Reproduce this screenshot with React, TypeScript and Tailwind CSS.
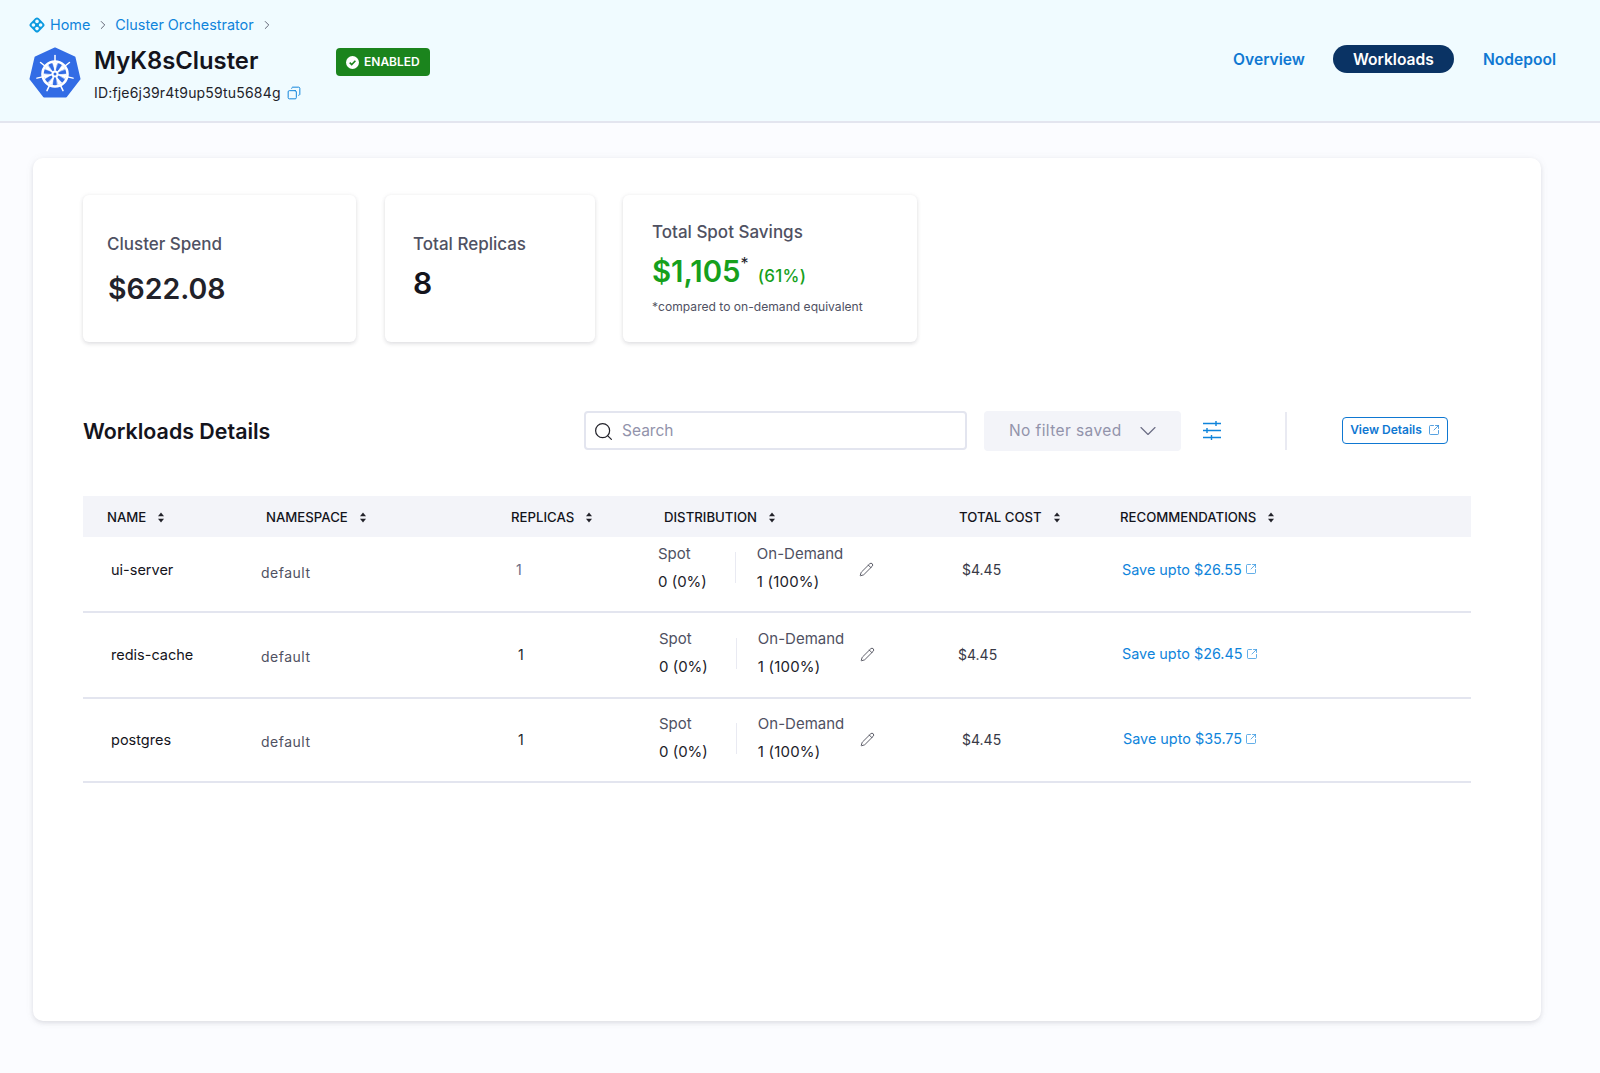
import { ChevronDown, ChevronRight, Copy, Pencil, Search, SquareArrowOutUpRight } from 'lucide-react';

const spokes = [0, 1, 2, 3, 4, 5, 6];

function K8sLogo() {
  return (
    <svg width="52" height="52" viewBox="0 0 52 52" className="shrink-0">
      <path d="M26 1.5 45.5 10.5 50.5 32 37 49.5H15L1.5 32 6.5 10.5Z" fill="#326ce5" stroke="#326ce5" strokeWidth="2" strokeLinejoin="round" />
      <g transform="translate(26 27)" stroke="#fff" fill="none" strokeLinecap="round">
        <circle r="12.5" strokeWidth="2.6" />
        {spokes.map((i) => (
          <g key={i} transform={`rotate(${(i * 360) / 7})`}>
            <line y1="-4" y2="-18.5" strokeWidth="1.5" />
            <path d="M0-3.5-2.4-11H2.4Z" fill="#fff" strokeWidth="0.5" />
          </g>
        ))}
        <circle r="3.6" fill="#fff" strokeWidth="0" />
        <circle r="1.5" fill="#326ce5" strokeWidth="0" />
      </g>
    </svg>
  );
}

function CrumbLogo() {
  return (
    <svg width="16" height="16" viewBox="0 0 16 16" className="shrink-0">
      <rect x="2" y="2" width="12" height="12" rx="2.6" fill="#0b9ae0" transform="rotate(45 8 8)" />
      <g fill="#f0fbff">
        <circle cx="8" cy="4.4" r="1.8" />
        <circle cx="8" cy="11.6" r="1.8" />
        <circle cx="4.4" cy="8" r="1.8" />
        <circle cx="11.6" cy="8" r="1.8" />
      </g>
    </svg>
  );
}

function SortIcon() {
  return (
    <svg width="8" height="11" viewBox="0 0 8 11" className="shrink-0" fill="#22222a">
      <path d="M4 .5 7 4.3H1Z" />
      <path d="M4 10.5 1 6.7H7Z" />
    </svg>
  );
}

function CheckBadge() {
  return (
    <svg width="13" height="13" viewBox="0 0 13 13" className="shrink-0">
      <circle cx="6.5" cy="6.5" r="6.5" fill="#fff" />
      <path d="M3.7 6.7 5.7 8.6 9.4 4.8" fill="none" stroke="#1b841d" strokeWidth="1.6" />
    </svg>
  );
}

function FilterLines() {
  return (
    <svg width="18" height="20" viewBox="0 0 18 20" className="ml-[22px] -mt-[2px] shrink-0" stroke="#0f84db" strokeWidth="1.4" fill="none">
      <path d="M0 3.5H18M0 10.5H18M0 17.5H18" />
      <path d="M13 1V6M4 8V13M8.5 15V20" />
    </svg>
  );
}

const headers = [
  { label: 'NAME', cell: 'pl-[24px]' },
  { label: 'NAMESPACE', cell: 'pl-[8px]' },
  { label: 'REPLICAS', cell: 'pl-[1px]' },
  { label: 'DISTRIBUTION', cell: 'pl-[9px]' },
  { label: 'TOTAL COST', cell: 'pl-[9px]' },
  { label: 'RECOMMENDATIONS', cell: 'pl-[10px]' },
];

const rows = [
  { name: 'ui-server', save: 'Save upto $26.55', height: 'h-[76px] pb-[9px]', replicas: 'pl-[6px] text-[#6b6d85]', dist: 'pl-[3px] -mt-[4px]', cost: 'pl-[12px]', rec: 'pl-[12px]' },
  { name: 'redis-cache', save: 'Save upto $26.45', height: 'h-[86px] pb-[2px]', replicas: 'pl-[8px] text-[#22222a]', dist: 'pl-[4px] -mt-[2px]', cost: 'pl-[8px]', rec: 'pl-[12px]' },
  { name: 'postgres', save: 'Save upto $35.75', height: 'h-[84px] pb-[2px]', replicas: 'pl-[8px] text-[#22222a]', dist: 'pl-[4px] -mt-[2px]', cost: 'pl-[12px]', rec: 'pl-[13px]' },
];

const gridCols = 'grid grid-cols-[175px_252px_145px_295px_160px_361px]';
const statCard = 'h-[147px] rounded-[6px] shadow-[0_2px_4px_rgba(40,41,61,0.12),0_0_4px_rgba(96,97,112,0.08)]';

export default function App() {
  return (
    <div className="min-h-[1073px] bg-[#fbfcff] font-['Inter',sans-serif] text-[#22222a]">
      {/* Header */}
      <header className="h-[123px] bg-[#f0fbff] border-b-2 border-[#e3e5ef] flex justify-between pl-[29px] pr-[44px]">
        <div>
          <div className="flex items-center h-[17px] mt-[16px] text-[14.4px] text-[#0f84db]">
            <CrumbLogo />
            <span className="ml-[5px]">Home</span>
            <ChevronRight size={14} strokeWidth={1.5} className="ml-[6px] text-[#4f5162]" />
            <span className="ml-[5px]">Cluster Orchestrator</span>
            <ChevronRight size={14} strokeWidth={1.5} className="ml-[6px] text-[#4f5162]" />
          </div>
          <div className="flex mt-[14px]">
            <K8sLogo />
            <div className="ml-[13px] -mt-[2px] w-[242px]">
              <div className="text-[23.8px] leading-[32px] font-semibold text-[#14141c]">MyK8sCluster</div>
              <div className="flex items-center mt-[6px] text-[14px] leading-[20px] tracking-[0.18px]">
                ID:fje6j39r4t9up59tu5684g
                <Copy size={14} strokeWidth={1.7} className="ml-[6px] text-[#0f84db] -scale-x-100" />
              </div>
            </div>
            <div className="mt-[1px] h-[28px] px-[10px] rounded-[4px] bg-[#1b841d] text-white text-[12px] font-semibold flex items-center gap-[5px]">
              <CheckBadge />
              ENABLED
            </div>
          </div>
        </div>
        <nav className="flex items-center h-[28px] mt-[45px] text-[15.6px] font-semibold text-[#0f78d2]">
          <span className="pt-[1px]">Overview</span>
          <span className="ml-[28px] pt-[1px] h-[28px] w-[121px] rounded-full bg-[#0a3364] text-white flex items-center justify-center">Workloads</span>
          <span className="ml-[29px] pt-[1px]">Nodepool</span>
        </nav>
      </header>

      {/* Main card */}
      <main className="ml-[33px] mt-[35px] w-[1508px] h-[863px] bg-white rounded-[10px] shadow-[0_2px_4px_rgba(40,41,61,0.1),0_1px_8px_rgba(96,97,112,0.08)] pl-[50px] pt-[37px]">
        <div className="flex items-start">
          <div className={`${statCard} w-[273px] pl-[24px] pt-[39px]`}>
            <div className="text-[17px] leading-[20px] font-medium text-[#4f5162]">Cluster Spend</div>
            <div className="mt-[15px] ml-[1px] text-[28.5px] leading-[40px] font-semibold text-[#22222a]">$622.08</div>
          </div>
          <div className={`${statCard} ml-[29px] w-[210px] pl-[28px] pt-[39px]`}>
            <div className="text-[17px] leading-[20px] font-medium text-[#4f5162]">Total Replicas</div>
            <div className="mt-[9px] text-[30px] leading-[40px] font-semibold text-[#14141c]">8</div>
          </div>
          <div className={`${statCard} ml-[28px] w-[294px] pl-[29px] pt-[27px]`}>
            <div className="text-[17px] leading-[20px] font-medium text-[#4f5162]">Total Spot Savings</div>
            <div className="mt-[10px] h-[40px] flex items-baseline text-[#16a01c]">
              <span className="text-[29.4px] leading-[40px] font-semibold">$1,105</span>
              <span className="text-[16px] text-[#22222a] self-start -mt-[1px]">*</span>
              <span className="ml-[9px] -mt-[1px] text-[17px] tracking-[0.3px] font-medium">(61%)</span>
            </div>
            <div className="mt-[6px] text-[12.1px] leading-[18px] text-[#4f5162]">*compared to on-demand equivalent</div>
          </div>
        </div>

        {/* Toolbar */}
        <div className="flex items-center h-[40px] mt-[69px]">
          <h2 className="w-[501px] text-[21.4px] font-semibold text-[#14141c]">Workloads Details</h2>
          <div className="w-[383px] h-[39px] -mt-[1px] pt-[1px] rounded-[4px] border-2 border-[#e3e5ef] flex items-center pl-[7px] text-[15.5px] text-[#9293ab]">
            <Search size={21} strokeWidth={1.4} className="text-[#22222a]" />
            <span className="ml-[8px]">Search</span>
          </div>
          <div className="ml-[17px] w-[197px] h-[40px] rounded-[4px] bg-[#f3f4f9] flex items-center pl-[25px] text-[15.5px] tracking-[0.4px] text-[#9293ab]">
            No filter saved
            <ChevronDown size={28} strokeWidth={1} className="ml-[12px] text-[#6b6d85]" />
          </div>
          <FilterLines />
          <div className="ml-[64px] w-[2px] h-[38px] bg-[#e9eaf2]" />
          <div className="ml-[55px] -mt-[2px] w-[106px] h-[27px] rounded-[4px] border border-[#0f78d2] flex items-center justify-center gap-[6px] text-[12px] font-semibold text-[#0f78d2]">
            View Details
            <SquareArrowOutUpRight size={12} strokeWidth={1.4} />
          </div>
        </div>

        {/* Table */}
        <div className="w-[1388px] mt-[45px]">
          <div className={`${gridCols} h-[41px] pt-[2px] bg-[#f3f4f9] items-center text-[13.2px] font-medium text-[#14141c]`}>
            {headers.map((h) => (
              <div key={h.label} className={`${h.cell} flex items-center gap-[11px]`}>
                {h.label}
                <SortIcon />
              </div>
            ))}
          </div>
          {rows.map((r) => (
            <div key={r.name} className={`${gridCols} ${r.height} items-center border-b-2 border-[#e3e5ef] text-[14px]`}>
              <div className="pl-[28px] pt-[1px] text-[14.5px] text-[#14141c]">{r.name}</div>
              <div className="pl-[3px] pt-[5px] text-[#4f5162] tracking-[0.5px]">default</div>
              <div className={r.replicas}>1</div>
              <div className={`${r.dist} flex items-center`}>
                <div>
                  <div className="text-[15px] leading-[22px] text-[#4f5162]">Spot</div>
                  <div className="mt-[6px] text-[15px] leading-[22px]">0 (0%)</div>
                </div>
                <div className="ml-[28px] w-px h-[31px] bg-[#e9eaf2]" />
                <div className="ml-[21px]">
                  <div className="text-[15px] leading-[22px] text-[#4f5162]">On-Demand</div>
                  <div className="mt-[6px] text-[15px] tracking-[0.2px] leading-[22px]">1 (100%)</div>
                </div>
                <Pencil size={15} strokeWidth={1.3} className="ml-[16px] mt-[3px] text-[#383946]" />
              </div>
              <div className={`${r.cost} text-[#383946]`}>$4.45</div>
              <div className={`${r.rec} flex items-center gap-[3px] text-[14.4px] text-[#0f84db]`}>
                {r.save}
                <SquareArrowOutUpRight size={12} strokeWidth={1.3} />
              </div>
            </div>
          ))}
        </div>
      </main>
    </div>
  );
}
